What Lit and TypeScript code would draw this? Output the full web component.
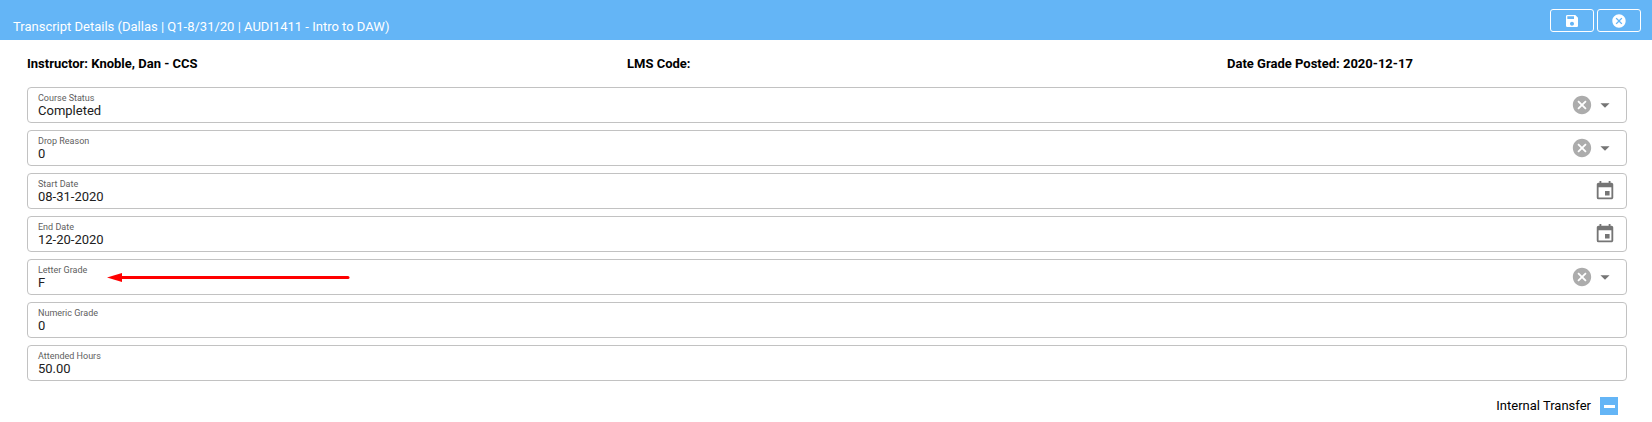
import { LitElement, html, css, svg, nothing } from "lit";
import { customElement, property } from "lit/decorators.js";

const icons = {
  save: svg`<path d="M17 3H5a2 2 0 0 0-2 2v14a2 2 0 0 0 2 2h14c1.100 0 2-.9 2-2V7l-4-4zm-5 16c-1.660 0-3-1.340-3-3s1.340-3 3-3 3 1.340 3 3-1.340 3-3 3zm3-10H5V5h10v4z"/>`,
  cancel: svg`<path d="M12 2C6.470 2 2 6.470 2 12s4.470 10 10 10 10-4.470 10-10S17.530 2 12 2zm5 13.590L15.590 17 12 13.410 8.410 17 7 15.590 10.590 12 7 8.410 8.410 7 12 10.590 15.590 7 17 8.410 13.410 12 17 15.590z"/>`,
  drop: svg`<path d="M7 10l5 5 5-5z"/>`,
  event: svg`<path d="M17 12h-5v5h5v-5zM16 1v2H8V1H6v2H5c-1.110 0-1.990.9-1.990 2L3 19a2 2 0 0 0 2 2h14c1.100 0 2-.9 2-2V5c0-1.100-.9-2-2-2h-1V1h-2zm3 18H5V8h14v11z"/>`,
};

const icon = (name: keyof typeof icons) =>
  html`<svg class="icon" viewBox="0 0 24 24" aria-hidden="true">${icons[name]}</svg>`;

const iconStyles = css`
  .icon {
    display: block;
    width: 22px;
    height: 22px;
    fill: currentColor;
  }
  button {
    margin: 0;
    padding: 0;
    border: 0;
    background: none;
    color: inherit;
    cursor: pointer;
  }
`;

type Kind = "select" | "date" | "text";

@customElement("detail-field")
export class DetailField extends LitElement {
  @property() label = "";
  @property() value = "";
  @property() kind: Kind = "text";
  @property({ type: Boolean }) marked = false;

  static styles = [
    iconStyles,
    css`
      :host {
        display: block;
      }
      .field {
        position: relative;
        display: flex;
        align-items: center;
        gap: 1px;
        padding: 4px 10px;
        border: 1px solid #c2c2c2;
        border-radius: 4px;
        color: #757575;
      }
      .text {
        display: flex;
        flex: 1;
        flex-direction: column;
        min-width: 0;
      }
      label {
        font-size: 9px;
        line-height: 12px;
        color: #606060;
      }
      .control {
        appearance: none;
        width: 100%;
        height: 14px;
        margin: 0;
        padding: 0;
        border: 0;
        outline: 0;
        background: none;
        font: inherit;
        line-height: 14px;
        color: #212121;
      }
      .clear {
        color: #acacac;
      }
      .arrow {
        position: absolute;
        left: 79px;
        top: 13px;
        width: 244px;
        height: 9px;
        pointer-events: none;
      }
    `,
  ];

  render() {
    return html`
      <div class="field">
        <div class="text">
          <label for="control">${this.label}</label>
          ${this.kind === "select"
            ? html`<select id="control" class="control"><option>${this.value}</option></select>`
            : html`<input id="control" class="control" type="text" .value=${this.value} />`}
        </div>
        ${this.kind === "select"
          ? html`<button class="clear" type="button" aria-label="Clear ${this.label}">${icon("cancel")}</button>${icon("drop")}`
          : nothing}
        ${this.kind === "date"
          ? html`<button type="button" aria-label="Choose ${this.label}">${icon("event")}</button>`
          : nothing}
        ${this.marked
          ? html`<svg class="arrow" viewBox="0 0 244 9" aria-hidden="true">
              <path d="M0 4.500L15 0v9z" fill="#f00" />
              <path d="M14 4.500h227" stroke="#f00" stroke-width="3" stroke-linecap="round" />
            </svg>`
          : nothing}
      </div>
    `;
  }
}

@customElement("app-root")
export class AppRoot extends LitElement {
  static styles = [
    iconStyles,
    css`
      :host {
        display: block;
        font-family: Roboto, sans-serif;
        font-size: 13px;
        line-height: 16px;
        color: #000;
        background: #fff;
      }
      header {
        display: flex;
        align-items: flex-end;
        justify-content: space-between;
        padding: 9px 11px 5px 13px;
        background: #64b5f6;
        color: #fff;
      }
      h1 {
        margin: 0;
        font-size: 13px;
        line-height: 16px;
        font-weight: 400;
      }
      .actions {
        display: flex;
        gap: 3px;
        padding-bottom: 3px;
      }
      .actions button {
        display: flex;
        align-items: center;
        justify-content: center;
        width: 44px;
        height: 23px;
        border: 1px solid #fff;
        border-radius: 3px;
      }
      .actions .icon {
        width: 16px;
        height: 16px;
      }
      main {
        padding: 16px 25px 0 27px;
      }
      .summary {
        display: grid;
        grid-template-columns: repeat(3, 1fr);
        column-gap: 12.5%;
        margin-bottom: 15px;
        font-weight: 700;
      }
      form {
        display: grid;
        gap: 7px;
      }
      .transfer {
        display: flex;
        align-items: center;
        justify-content: flex-end;
        gap: 9px;
        padding: 9px 9px 7px 0;
      }
      .transfer input {
        appearance: none;
        display: grid;
        place-items: center;
        width: 18px;
        height: 18px;
        margin: 0;
        background: #64b5f6;
      }
      .transfer input::before {
        content: "";
        width: 11px;
        height: 3px;
        background: #fff;
      }
    `,
  ];

  private fields: { label: string; value: string; kind: Kind; marked?: boolean }[] = [
    { label: "Course Status", value: "Completed", kind: "select" },
    { label: "Drop Reason", value: "0", kind: "select" },
    { label: "Start Date", value: "08-31-2020", kind: "date" },
    { label: "End Date", value: "12-20-2020", kind: "date" },
    { label: "Letter Grade", value: "F", kind: "select", marked: true },
    { label: "Numeric Grade", value: "0", kind: "text" },
    { label: "Attended Hours", value: "50.00", kind: "text" },
  ];

  render() {
    return html`
      <header>
        <h1>Transcript Details (Dallas | Q1-8/31/20 | AUDI1411 - Intro to DAW)</h1>
        <div class="actions">
          <button type="button" aria-label="Save">${icon("save")}</button>
          <button type="button" aria-label="Close">${icon("cancel")}</button>
        </div>
      </header>
      <main>
        <div class="summary">
          <div>Instructor: Knoble, Dan - CCS</div>
          <div>LMS Code:</div>
          <div>Date Grade Posted: 2020-12-17</div>
        </div>
        <form>
          ${this.fields.map(
            (f) => html`<detail-field
              .label=${f.label}
              .value=${f.value}
              .kind=${f.kind}
              .marked=${!!f.marked}
            ></detail-field>`
          )}
          <div class="transfer">
            <label for="transfer">Internal Transfer</label>
            <input id="transfer" type="checkbox" .indeterminate=${true} />
          </div>
        </form>
      </main>
    `;
  }
}
